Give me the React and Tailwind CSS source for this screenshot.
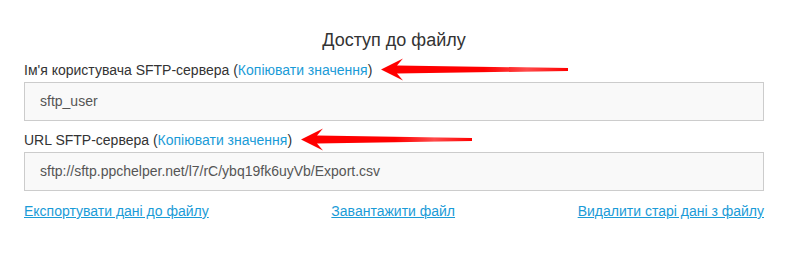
const Arrow = ({ width }) => {
  return (
    <svg
      width={width}
      height="24"
      viewBox={`0 0 ${width} 24`}
      className="absolute top-1/2 -translate-y-1/2"
      style={{ left: "calc(100% + 9px)" }}
    >
      <defs>
        <linearGradient id={`ag${width}`} x1="0" y1="0" x2="1" y2="0">
          <stop offset="0" stopColor="#ff0000" />
          <stop offset="0.55" stopColor="#ff0000" />
          <stop offset="0.78" stopColor="#ff4a4a" />
          <stop offset="1" stopColor="#ff0000" />
        </linearGradient>
      </defs>
      <polygon
        points={`0,11.5 22,0.5 16,7.5 ${width},10 ${width},13 16,15.5 22,22.5`}
        fill={`url(#ag${width})`}
      />
    </svg>
  );
};

const Field = ({ label, value, arrow }) => {
  return (
    <div>
      <div className="h-[20px] flex items-center">
        <span className="relative text-[14px] leading-[20px] text-[#333]">
          {label} (
          <a href="#" className="text-[#1a9bd7]">
            Копіювати значення
          </a>
          )
          <Arrow width={arrow} />
        </span>
      </div>
      <div className="mt-[2px] h-[39px] border border-[#cccccc] bg-[#f9f9f9] flex items-center pl-[15px] text-[14px] text-[#555]">
        {value}
      </div>
    </div>
  );
};

const App = () => {
  return (
    <div
      className="w-[787px] h-[267px] bg-white"
      style={{ fontFamily: '"Liberation Sans", Arial, sans-serif' }}
    >
      <div className="ml-[24px] w-[740px] pt-[28px]">
        <h1 className="text-center text-[18px] leading-[24px] text-[#333] mb-[8px]">
          Доступ до файлу
        </h1>
        <div className="flex flex-col gap-[9px]">
          <Field
            label="Ім'я користувача SFTP-сервера"
            value="sftp_user"
            arrow={187}
          />
          <Field
            label="URL SFTP-сервера"
            value="sftp://sftp.ppchelper.net/l7/rC/ybq19fk6uyVb/Export.csv"
            arrow={171}
          />
        </div>
        <div className="mt-[10px] flex justify-between text-[14px] leading-[20px]">
          <a href="#" className="text-[#1a9bd7] underline">
            Експортувати дані до файлу
          </a>
          <a href="#" className="text-[#1a9bd7] underline">
            Завантажити файл
          </a>
          <a href="#" className="text-[#1a9bd7] underline">
            Видалити старі дані з файлу
          </a>
        </div>
      </div>
    </div>
  );
};

export default App;
